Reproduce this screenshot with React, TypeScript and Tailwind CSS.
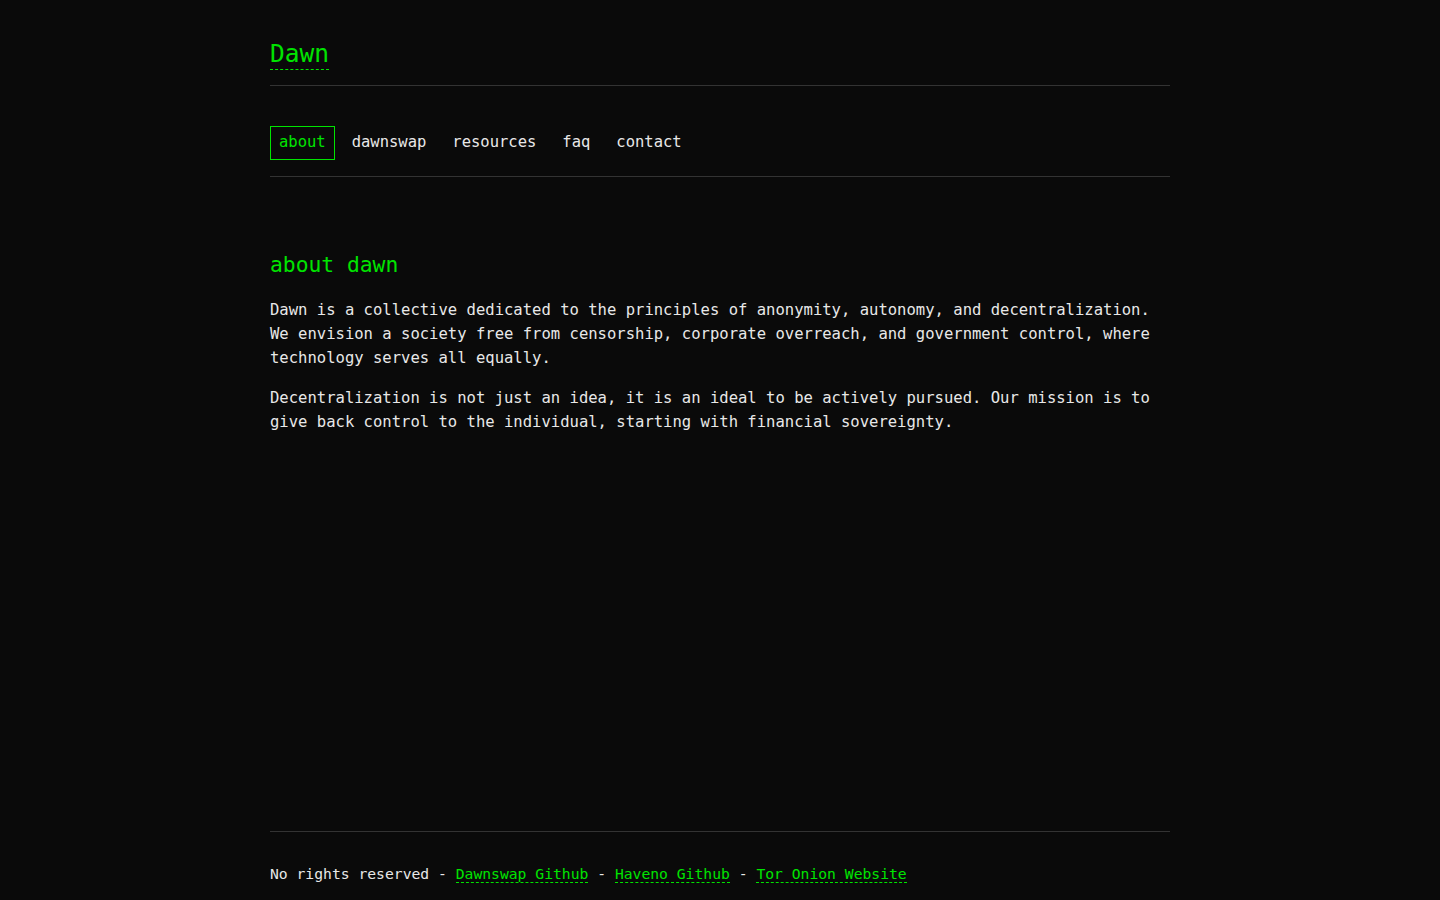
const mono = { fontFamily: '"DejaVu Sans Mono", "Liberation Mono", monospace' };

const navItems = ['about', 'dawnswap', 'resources', 'faq', 'contact'];

export default function App() {
  return (
    <div style={mono} className="min-h-screen bg-[#0a0a0a] text-[#e8e8e8]">
      <div className="mx-auto flex min-h-screen w-[900px] flex-col">
        <header className="border-b border-[#333333] pt-[40px] pb-[15px]">
          <h1 className="inline-block border-b border-dashed border-[#00e400] pb-[1px] text-[24.5px] leading-[28px] text-[#00e400]">
            Dawn
          </h1>
        </header>

        <nav className="mt-[40px] flex gap-2 border-b border-[#333333] pb-[16px]">
          {navItems.map((item) => (
            <a
              key={item}
              href="#"
              className={
                item === 'about'
                  ? 'border border-[#00e400] px-2 pt-[3px] pb-[5px] text-[15.5px] leading-6 text-[#00e400]'
                  : 'border border-transparent px-2 pt-[3px] pb-[5px] text-[15.5px] leading-6 text-[#e8e8e8]'
              }
            >
              {item}
            </a>
          ))}
        </nav>

        <main className="flex-1 pt-[75px]">
          <h2 className="mb-5 text-[21.3px] leading-[25.6px] text-[#00e400]">about dawn</h2>
          <p className="mb-4 text-[15.55px] leading-6">
            Dawn is a collective dedicated to the principles of anonymity, autonomy, and decentralization.
            We envision a society free from censorship, corporate overreach, and government control, where
            technology serves all equally.
          </p>
          <p className="text-[15.55px] leading-6">
            Decentralization is not just an idea, it is an ideal to be actively pursued. Our mission is to
            give back control to the individual, starting with financial sovereignty.
          </p>
        </main>

        <footer className="border-t border-[#333333] pt-[30px] pb-[14px] text-[14.7px] leading-6">
          No rights reserved -{' '}
          <a href="#" className="border-b border-dashed border-[#00e400] text-[#00e400]">
            Dawnswap Github
          </a>{' '}
          -{' '}
          <a href="#" className="border-b border-dashed border-[#00e400] text-[#00e400]">
            Haveno Github
          </a>{' '}
          -{' '}
          <a href="#" className="border-b border-dashed border-[#00e400] text-[#00e400]">
            Tor Onion Website
          </a>
        </footer>
      </div>
    </div>
  );
}
